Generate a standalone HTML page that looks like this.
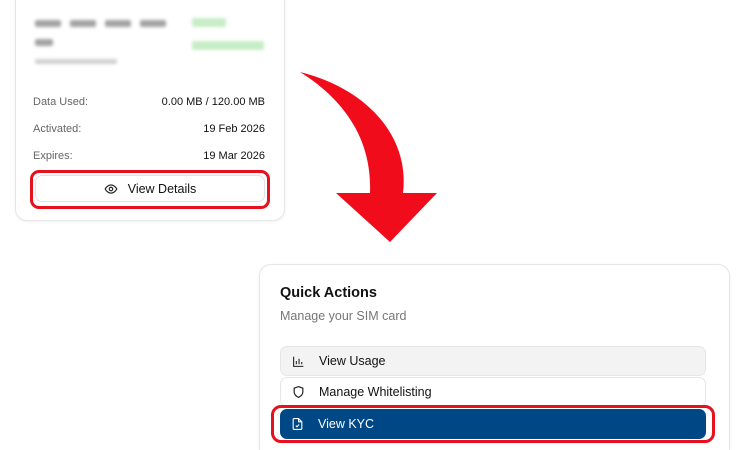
<!DOCTYPE html>
<html style="height:450px;overflow:hidden"><head><style>
body{margin:0;width:750px;height:450px;background:#fff;font-family:"Liberation Sans",Arial,sans-serif;position:relative;overflow:hidden}
.card{position:absolute;background:#fff;border:1px solid #e6e6e6;border-radius:12px;box-shadow:0 1px 3px rgba(0,0,0,.06)}
.blur{position:absolute;filter:blur(1.5px);border-radius:2px}
.row{position:absolute;font-size:11px;display:flex;justify-content:space-between}
.row span:first-child{color:#666}
.row span:last-child{color:#111}
.btn{position:absolute;border-radius:7px;font-size:12.5px;display:flex;align-items:center}
</style></head><body>
<div class="card" style="left:15px;top:-12px;width:268px;height:231px">
  <div class="blur" style="left:19px;top:31px;width:26px;height:7px;background:#666;opacity:.6"></div>
  <div class="blur" style="left:54px;top:31px;width:26px;height:7px;background:#666;opacity:.6"></div>
  <div class="blur" style="left:89px;top:31px;width:26px;height:7px;background:#666;opacity:.6"></div>
  <div class="blur" style="left:124px;top:31px;width:26px;height:7px;background:#666;opacity:.6"></div>
  <div class="blur" style="left:19px;top:50px;width:18px;height:7px;background:#666;opacity:.6"></div>
  <div class="blur" style="left:19px;top:70px;width:82px;height:5px;background:#999;opacity:.45"></div>
  <div class="blur" style="left:176px;top:29px;width:34px;height:9px;background:#8fdc8f;opacity:.5"></div>
  <div class="blur" style="left:176px;top:52px;width:72px;height:9px;background:#8fdc8f;opacity:.5"></div>
</div>
<div class="row" style="top:96px;left:33px;width:232px"><span>Data Used:</span><span>0.00 MB / 120.00 MB</span></div>
<div class="row" style="top:123px;left:33px;width:232px"><span>Activated:</span><span>19 Feb 2026</span></div>
<div class="row" style="top:150px;left:33px;width:232px"><span>Expires:</span><span>19 Mar 2026</span></div>
<div class="btn" style="left:30px;top:170px;width:240px;height:39px;border:3px solid #e8101c;border-radius:9px;box-sizing:border-box"></div>
<div class="btn" style="left:35px;top:175px;width:230px;height:27px;border:1px solid #e2e2e2;justify-content:center;color:#111;box-sizing:border-box">
<svg width="14" height="14" viewBox="0 0 24 24" fill="none" stroke="#222" stroke-width="2" style="margin-right:10px"><path d="M2 12s4-7 10-7 10 7 10 7-4 7-10 7S2 12 2 12z"/><circle cx="12" cy="12" r="3"/></svg>View Details</div>

<svg style="position:absolute;left:0;top:0" width="750" height="450"><path d="M300,72 C365,88 410,135 403,193 L437,193 L390,242 L336,193 L370,193 C372,140 345,100 300,72 Z" fill="#f00c1b"/></svg>

<div class="card" style="left:259px;top:264px;width:469px;height:186px;border-bottom:none;border-radius:12px 12px 0 0"></div>
<div style="position:absolute;left:280px;top:285px;font-size:14.5px;font-weight:bold;color:#111">Quick Actions</div>
<div style="position:absolute;left:280px;top:309px;font-size:12.5px;color:#777">Manage your SIM card</div>
<div class="btn" style="left:280px;top:346px;width:426px;height:30px;background:#f3f3f3;border:1px solid #e6e6e6;box-sizing:border-box;color:#111">
<svg width="13" height="13" viewBox="0 0 24 24" fill="none" stroke="#222" stroke-width="2" style="margin-left:11px;margin-right:14px"><path d="M3 3v18h18M8 17V11M13 17V7M18 17v-4"/></svg>View Usage</div>
<div class="btn" style="left:280px;top:377px;width:426px;height:30px;background:#fff;border:1px solid #e6e6e6;box-sizing:border-box;color:#111">
<svg width="13" height="14" viewBox="0 0 24 24" fill="none" stroke="#222" stroke-width="2.2" style="margin-left:11px;margin-right:14px"><path d="M12 2l8 3v7c0 5-4 8-8 10-4-2-8-5-8-10V5z"/></svg>Manage Whitelisting</div>
<div class="btn" style="left:271px;top:405px;width:444px;height:38px;border:3px solid #e8101c;border-radius:10px;box-sizing:border-box"></div>
<div class="btn" style="left:280px;top:409px;width:426px;height:30px;background:#004785;color:#fff">
<svg width="13" height="14" viewBox="0 0 24 24" fill="none" stroke="#fff" stroke-width="2" style="margin-left:11px;margin-right:14px"><path d="M14 2H6a2 2 0 0 0-2 2v16a2 2 0 0 0 2 2h12a2 2 0 0 0 2-2V8z"/><path d="M14 2v6h6M9 15l2 2 4-4"/></svg>View KYC</div>
</body></html>
